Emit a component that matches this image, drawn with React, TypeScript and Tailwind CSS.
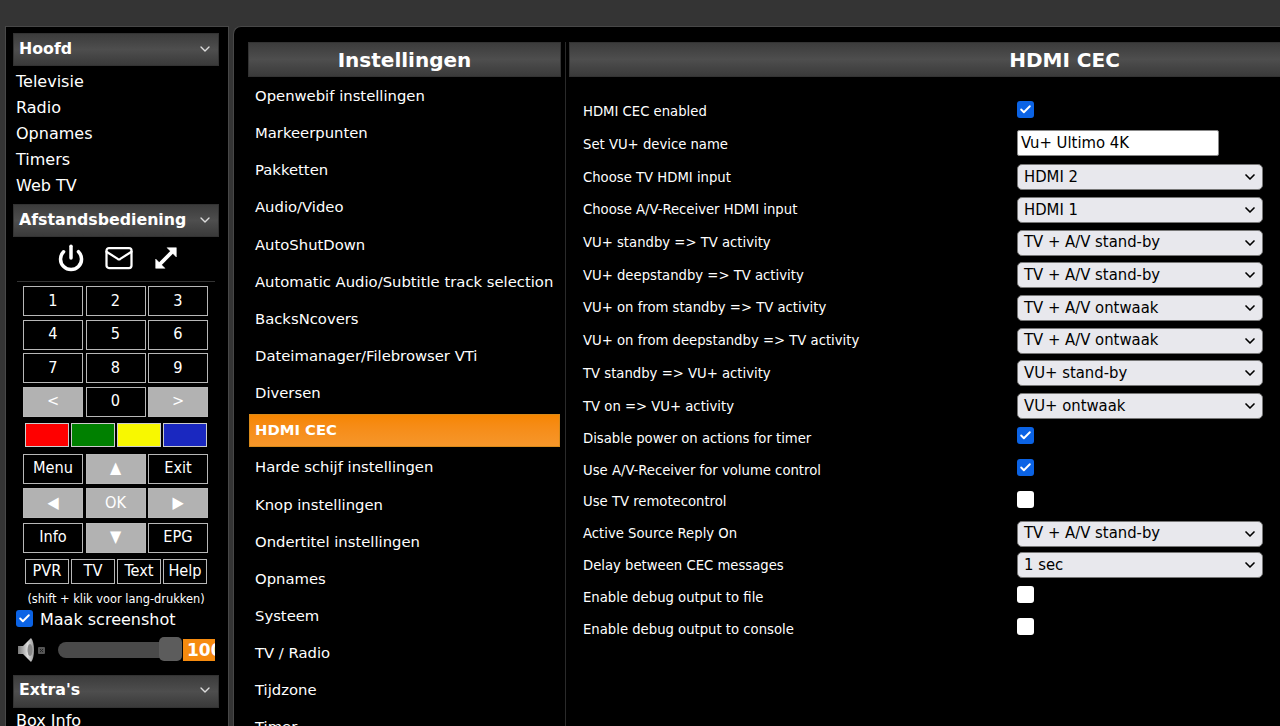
import { Power, Mail, ChevronDown, Check } from 'lucide-react'

const FONT = "font-['DejaVu_Sans',sans-serif]"
const HEADER = 'bg-gradient-to-b from-[#3c3c3c] via-[#4e4e4e] to-[#3a3a3a] border border-[#333]'

const MAIN_MENU = ['Televisie', 'Radio', 'Opnames', 'Timers', 'Web TV']
const SETTINGS = [
  'Openwebif instellingen',
  'Markeerpunten',
  'Pakketten',
  'Audio/Video',
  'AutoShutDown',
  'Automatic Audio/Subtitle track selection',
  'BacksNcovers',
  'Dateimanager/Filebrowser VTi',
  'Diversen',
  'HDMI CEC',
  'Harde schijf instellingen',
  'Knop instellingen',
  'Ondertitel instellingen',
  'Opnames',
  'Systeem',
  'TV / Radio',
  'Tijdzone',
  'Timer',
]

type Row =
  | { label: string; type: 'check'; checked: boolean }
  | { label: string; type: 'text'; value: string }
  | { label: string; type: 'select'; value: string }

const ROWS: Row[] = [
  { label: 'HDMI CEC enabled', type: 'check', checked: true },
  { label: 'Set VU+ device name', type: 'text', value: 'Vu+ Ultimo 4K' },
  { label: 'Choose TV HDMI input', type: 'select', value: 'HDMI 2' },
  { label: 'Choose A/V-Receiver HDMI input', type: 'select', value: 'HDMI 1' },
  { label: 'VU+ standby => TV activity', type: 'select', value: 'TV + A/V stand-by' },
  { label: 'VU+ deepstandby => TV activity', type: 'select', value: 'TV + A/V stand-by' },
  { label: 'VU+ on from standby => TV activity', type: 'select', value: 'TV + A/V ontwaak' },
  { label: 'VU+ on from deepstandby => TV activity', type: 'select', value: 'TV + A/V ontwaak' },
  { label: 'TV standby => VU+ activity', type: 'select', value: 'VU+ stand-by' },
  { label: 'TV on => VU+ activity', type: 'select', value: 'VU+ ontwaak' },
  { label: 'Disable power on actions for timer', type: 'check', checked: true },
  { label: 'Use A/V-Receiver for volume control', type: 'check', checked: true },
  { label: 'Use TV remotecontrol', type: 'check', checked: false },
  { label: 'Active Source Reply On', type: 'select', value: 'TV + A/V stand-by' },
  { label: 'Delay between CEC messages', type: 'select', value: '1 sec' },
  { label: 'Enable debug output to file', type: 'check', checked: false },
  { label: 'Enable debug output to console', type: 'check', checked: false },
]

function SideHeader({ title }: { title: string }) {
  return (
    <div className={`${HEADER} h-[33px] flex items-center justify-between pl-[5px] pr-[5px] text-[15.8px] font-bold text-white pb-[2px]`}>
      <span>{title}</span>
      <ChevronDown size={16} strokeWidth={2} className="text-[#ddd]" />
    </div>
  )
}

function CheckBox({ checked, className = '' }: { checked: boolean; className?: string }) {
  return checked ? (
    <span className={`w-[17px] h-[17px] rounded-[3px] bg-[#0b63e5] flex items-center justify-center ${className}`}>
      <Check size={13} strokeWidth={3.5} className="text-white" />
    </span>
  ) : (
    <span className={`w-[17px] h-[17px] rounded-[3px] bg-white block ${className}`} />
  )
}

function RemoteKey({ label, grey, w = 'w-[60px]', h = 'h-[30px]', size = 'text-[16.2px]' }: { label: string; grey?: boolean; w?: string; h?: string; size?: string }) {
  return (
    <div
      className={`${w} ${h} ${size} font-stretch-condensed flex items-center justify-center border-[1.5px] border-[#b8b8b8] text-white ${grey ? 'bg-[#b2b2b2]' : 'bg-black'}`}
    >
      {label}
    </div>
  )
}

function KeyRow({ children, className = '' }: { children: React.ReactNode; className?: string }) {
  return <div className={`flex justify-center gap-[2.5px] ${className}`}>{children}</div>
}

function Remote() {
  return (
    <div>
      <div className="h-[44px] flex items-center justify-center gap-[19px] pl-[3px] pb-[2px] text-white">
        <Power size={28} strokeWidth={3} />
        <Mail size={30} strokeWidth={1.8} />
        <svg width="26" height="26" viewBox="0 0 24 24" fill="none" stroke="currentColor" strokeWidth="3.4">
          <path d="M5 19 L19 5" />
          <path d="M13 2.5 H21.5 V11 Z" fill="currentColor" strokeWidth="0.5" />
          <path d="M2.5 13 V21.5 H11 Z" fill="currentColor" strokeWidth="0.5" />
        </svg>
      </div>
      <div className="h-px bg-[#333] mx-[4px] mb-[4px]" />
      <div className="flex flex-col gap-[3.5px] pr-[1px]">
        <KeyRow><RemoteKey label="1" /><RemoteKey label="2" /><RemoteKey label="3" /></KeyRow>
        <KeyRow><RemoteKey label="4" /><RemoteKey label="5" /><RemoteKey label="6" /></KeyRow>
        <KeyRow><RemoteKey label="7" /><RemoteKey label="8" /><RemoteKey label="9" /></KeyRow>
        <KeyRow><RemoteKey label="<" grey /><RemoteKey label="0" /><RemoteKey label=">" grey /></KeyRow>
      </div>
      <KeyRow className="mt-[6px] gap-[2px]">
        <div className="w-[44px] h-[24px] bg-[#ff0000] border border-[#ccc]" />
        <div className="w-[44px] h-[24px] bg-[#008000] border border-[#ccc]" />
        <div className="w-[44px] h-[24px] bg-[#f8f800] border border-[#ccc]" />
        <div className="w-[44px] h-[24px] bg-[#1a28c0] border border-[#ccc]" />
      </KeyRow>
      <div className="flex flex-col gap-[4.5px] mt-[7px] pr-[1px]">
        <KeyRow><RemoteKey label="Menu" /><RemoteKey label="▲" grey /><RemoteKey label="Exit" /></KeyRow>
        <KeyRow><RemoteKey label="◀" grey /><RemoteKey label="OK" grey /><RemoteKey label="▶" grey /></KeyRow>
        <KeyRow><RemoteKey label="Info" /><RemoteKey label="▼" grey /><RemoteKey label="EPG" /></KeyRow>
      </div>
      <KeyRow className="mt-[6px] gap-[2px]">
        <RemoteKey label="PVR" w="w-[44px]" h="h-[25px]" />
        <RemoteKey label="TV" w="w-[44px]" h="h-[25px]" />
        <RemoteKey label="Text" w="w-[44px]" h="h-[25px]" />
        <RemoteKey label="Help" w="w-[44px]" h="h-[25px]" />
      </KeyRow>
      <p className="text-[11.4px] text-center text-white mt-[8px] leading-[14px] whitespace-nowrap">(shift + klik voor lang-drukken)</p>
      <label className="flex items-center gap-[7px] pl-[3px] mt-[4px] text-[16px] text-white h-[20px]">
        <CheckBox checked className="mb-[2px]" />
        Maak screenshot
      </label>
      <div className="flex items-center pl-[4px] mt-[8px] h-[24px]">
        <svg width="30" height="26" viewBox="0 0 30 26" className="shrink-0">
          <defs>
            <linearGradient id="cone" x1="0" y1="0" x2="1" y2="0">
              <stop offset="0" stopColor="#777" />
              <stop offset="0.6" stopColor="#ddd" />
              <stop offset="1" stopColor="#999" />
            </linearGradient>
          </defs>
          <path d="M1 9 H6 L14 1 C18 5 18 21 14 25 L6 17 H1 Z" fill="url(#cone)" />
          <ellipse cx="13" cy="13" rx="2.5" ry="6" fill="#888" />
          <rect x="21" y="10" width="7" height="7" rx="1" fill="#555" />
          <path d="M23 12 L26 15 M26 12 L23 15" stroke="#222" strokeWidth="1" />
        </svg>
        <div className="relative w-[124px] h-[16px] ml-[11px] rounded-full bg-[#4a4a4a] shrink-0">
          <div className="absolute right-0 top-[-5px] w-[23px] h-[24px] rounded-[5px] bg-[#5c5c5c]" />
        </div>
        <div className="w-[32px] h-[22px] ml-[1px] bg-[#f68b0f] overflow-hidden text-white font-bold text-[17px] leading-[22px] pl-[4px] whitespace-nowrap shrink-0">100</div>
      </div>
    </div>
  )
}

function SettingControl({ row }: { row: Row }) {
  if (row.type === 'check') return <CheckBox checked={row.checked} className="mb-[8px]" />
  if (row.type === 'text') {
    return (
      <div className="w-[202px] h-[26px] mb-[7px] rounded-[2px] bg-white border border-[#888] text-black text-[16.5px] font-stretch-condensed leading-[24px] pl-[3px]">
        {row.value}
      </div>
    )
  }
  return (
    <div className="w-[246px] h-[26px] mb-[3px] rounded-[5px] bg-[#e8e8ed] border border-[#777] text-black text-[16.5px] font-stretch-condensed flex items-center justify-between pl-[6px] pr-[4px]">
      <span>{row.value}</span>
      <ChevronDown size={16} strokeWidth={2.5} />
    </div>
  )
}

export default function App() {
  return (
    <div className={`${FONT} h-screen overflow-hidden bg-[#343434] pt-[26px] pl-[5px] flex items-start gap-[4px]`}>
      <aside className="w-[224px] h-[720px] shrink-0 bg-black border border-[#484848] pt-[6px] pl-[7px] pr-[9px]">
        <SideHeader title="Hoofd" />
        <ul className="mt-[3px] pl-[3px] text-[16px] text-white">
          {MAIN_MENU.map((item) => (
            <li key={item} className="h-[26px] leading-[26px]">{item}</li>
          ))}
        </ul>
        <div className="mt-[5px]"><SideHeader title="Afstandsbediening" /></div>
        <Remote />
        <div className="mt-[13px]"><SideHeader title="Extra's" /></div>
        <div className="pl-[3px] text-[16px] text-white leading-[26px]">Box Info</div>
      </aside>

      <main className="flex-1 min-w-0 h-[720px] overflow-hidden bg-black border-t border-l border-[#484848] rounded-tl-[8px] pt-[15px] pl-[14px] flex">
        <nav className="w-[318px] shrink-0 border-r border-[#2a2a2a] pr-[4px] h-full">
          <div className={`${HEADER} h-[35px] text-center text-white font-bold text-[20px] leading-[35px]`}>Instellingen</div>
          <ul className="mt-[1px] text-[14.8px] text-white">
            {SETTINGS.map((item) => (
              <li
                key={item}
                className={
                  item === 'HDMI CEC'
                    ? 'h-[33px] mt-[1.6px] mb-[2.6px] mx-px pl-[5px] leading-[29px] font-bold bg-gradient-to-b from-[#f68600] to-[#f6962a] border border-[#d98a1a]'
                    : 'h-[37.15px] pl-[7px] leading-[36px] whitespace-nowrap'
                }
              >
                {item}
              </li>
            ))}
          </ul>
        </nav>
        <section className="w-[994px] shrink-0 pl-[3px]">
          <div className={`${HEADER} h-[35px] text-center text-white font-bold text-[20px] leading-[35px]`}>HDMI CEC</div>
          <div className="mt-[20px] pl-[14px] text-[14.7px] font-stretch-condensed text-white">
            {ROWS.map((row, i) => (
              <div key={row.label} className={`flex items-center ${i >= 10 ? 'h-[31.8px]' : 'h-[32.7px]'}`}>
                <span className="w-[434px] shrink-0 whitespace-nowrap mb-[4px]">{row.label}</span>
                <SettingControl row={row} />
              </div>
            ))}
          </div>
        </section>
      </main>
    </div>
  )
}
